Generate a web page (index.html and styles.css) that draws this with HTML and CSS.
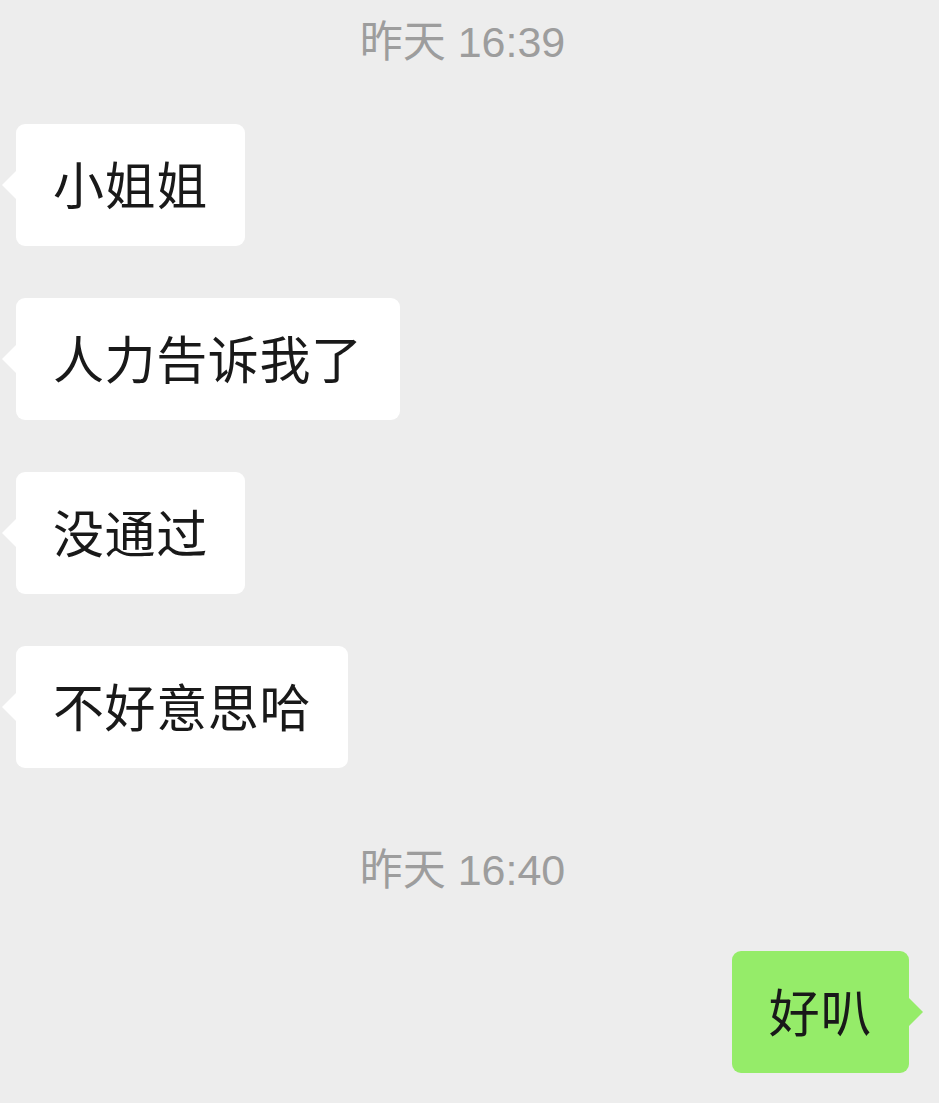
FILE: index.html
```html
<!DOCTYPE html>
<html lang="zh-CN">
<head>
<meta charset="utf-8">
<title>聊天</title>
<link rel="stylesheet" href="styles.css">
</head>
<body>
<div class="chat">
  <div class="time first">昨天 16:39</div>
  <div class="row left"><div class="bubble">小姐姐</div></div>
  <div class="row left"><div class="bubble">人力告诉我了</div></div>
  <div class="row left"><div class="bubble">没通过</div></div>
  <div class="row left"><div class="bubble">不好意思哈</div></div>
  <div class="time">昨天 16:40</div>
  <div class="row right"><div class="bubble mine">好叭</div></div>
</div>
</body>
</html>
```

FILE: styles.css
```css
html, body {
  margin: 0;
  padding: 0;
  background: #ededed;
}
body {
  width: 939px;
  height: 1103px;
  overflow: hidden;
  font-family: "Noto Sans CJK SC", "Noto Sans", sans-serif;
}
.chat {
  display: flex;
  flex-direction: column;
  padding: 17px 30px 0 16px;
}
.time {
  text-align: center;
  font-family: "Liberation Sans", "Noto Sans CJK SC", sans-serif;
  font-size: 43px;
  line-height: 50px;
  color: #9d9d9d;
  margin: 77px 0 56px;
}
.time.first {
  margin: 0 0 57px;
}
.row {
  display: flex;
}
.row + .row {
  margin-top: 52px;
}
.row.right {
  justify-content: flex-end;
}
.bubble {
  position: relative;
  background: #ffffff;
  color: #191919;
  font-size: 51px;
  line-height: 72px;
  letter-spacing: 0.6px;
  padding: 23px 37px 27px;
  border-radius: 9px;
}
.bubble::before {
  content: "";
  position: absolute;
  top: 47px;
  left: -14px;
  border-top: 14px solid transparent;
  border-bottom: 14px solid transparent;
  border-right: 14px solid #ffffff;
}
.bubble.mine {
  background: #95ec69;
}
.bubble.mine::before {
  left: auto;
  right: -14px;
  border-right: none;
  border-left: 14px solid #95ec69;
}
```
